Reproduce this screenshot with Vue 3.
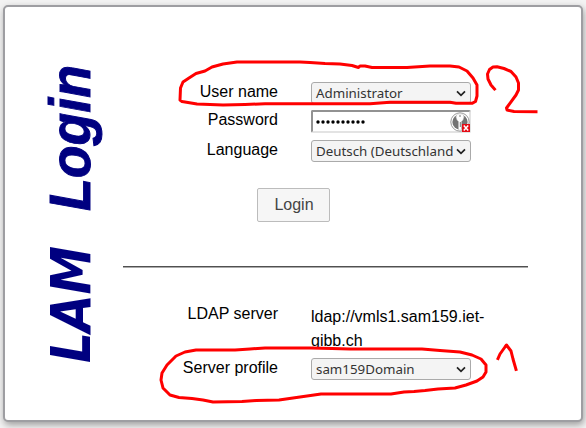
<script setup>
const credentials = [
  { label: 'User name', value: 'Administrator', type: 'select' },
  { label: 'Password', value: '••••••••••', type: 'password' },
  { label: 'Language', value: 'Deutsch (Deutschland', type: 'select' },
]
const server = { label: 'LDAP server', value: 'ldap://vmls1.sam159.iet-gibb.ch' }
const profile = { label: 'Server profile', value: 'sam159Domain' }
</script>

<template>
  <div class="page">
    <main class="card">
      <svg class="brand" width="118" height="413" viewBox="5 7 118 413">
        <text class="brand-text" transform="translate(90 363) rotate(-90)" textLength="117" lengthAdjust="spacingAndGlyphs">LAM</text>
        <text class="brand-text brand-word" transform="translate(89.5 211) rotate(-90)" textLength="146" lengthAdjust="spacingAndGlyphs">Login</text>
      </svg>

      <div class="form">
        <div v-for="row in credentials" :key="row.label" class="row">
          <label class="label">{{ row.label }}</label>
          <div v-if="row.type === 'select'" class="select">
            <span class="value">{{ row.value }}</span>
            <svg class="chevron" width="10" height="7" viewBox="0 0 10 7"><path d="M1 1.3 L5 5.3 L9 1.3" /></svg>
          </div>
          <div v-else class="password">
            <svg class="dots" width="54" height="6" viewBox="0 0 54 6">
              <circle v-for="n in 10" :key="n" :cx="n * 5 - 3" cy="3" r="1.7" />
            </svg>
            <svg class="key" width="20" height="20" viewBox="0 0 20 20">
              <circle cx="10" cy="10" r="9.2" fill="#fff" stroke="#999" />
              <circle cx="10" cy="10" r="7.6" fill="#737373" />
              <path d="M7 2 H13 L14 5 L13 8 L11.5 9.5 V18 H8.5 V9.5 L7 8 L6 5 Z" fill="#fff" stroke="#bbb" stroke-width=".5" />
              <path d="M10 3V5M10.3 10V15" stroke="#777" />
              <rect x="12" y="12" width="8" height="8" fill="#e50b16" />
              <path d="M13.8 13.5 L18.2 18.5 M18.2 13.5 L13.8 18.5" stroke="#fff" stroke-width="1.5" />
            </svg>
          </div>
        </div>

        <button class="login">Login</button>
        <div class="rule"></div>

        <div class="row server">
          <span class="label">{{ server.label }}</span>
          <span class="url">{{ server.value }}</span>
        </div>
        <div class="row">
          <label class="label">{{ profile.label }}</label>
          <div class="select">
            <span class="value">{{ profile.value }}</span>
            <svg class="chevron" width="10" height="7" viewBox="0 0 10 7"><path d="M1 1.3 L5 5.3 L9 1.3" /></svg>
          </div>
        </div>
      </div>
    </main>

    <svg class="marks" width="586" height="428" viewBox="0 0 586 428">
      <path d="M358.500 67.500 L352 65.500 L340 64 L325 63.500 L310 62.500 L300 62 L237 62 L223 64 L212 67 L205 71 L196 73.500 L189 78 L183 82 L180.500 88 L180 100 L182 101.500 L188 102.500 L197 104 L223 105 L245 104.500 L265 103.800 L370 103.800 L390 102.200 L450 102.200 L456 103.300 L472 103.300 L475.500 101.500 L477 96 L477 85 L473 78 L467 71 L459 67 L450 66 L430 66 L407 67.500 L372 67.500 L365 66 L360 66 Z" />
      <path d="M494.500 89 L491 85 L488 79 L487.500 74 L489.500 69.500 L493 67 L497 66.800 L504 68.500 L511 71.500 L516 77 L518.500 83 L518.500 90 L516 95 L506.500 108 L507 110 L514 111.500 L536 111.700" />
      <path d="M235 350 L196 350 L185 352 L176 356 L167 365 L162 373 L161 380 L163 388 L170 395 L179 397.500 L192 398.500 L203 400 L213 402 L242 401.500 L256 400.500 L279 400 L300 397 L321 394 L391 394 L404 392 L414 391.500 L425 390.500 L438 389 L455 388 L466 385 L477 381 L483 377 L486 372 L486 365 L481 359 L472 355 L460 352 L440 350.500 L422 349 L371 349 L350 349 L332 348.500 L310 348 L290 348 L265 348 L250 349 Z" />
      <path d="M498 358.500 L500 354 L505 347 L506.500 345 L511 351 L513 359 L516 369.500" />
    </svg>
  </div>
</template>

<style>
body { margin: 0; background: #f3f3f3; overflow: hidden; }
</style>

<style scoped>
.page {
  position: relative;
  width: 586px;
  height: 428px;
  box-sizing: border-box;
  padding: 5px 3px 6px;
  background: #f3f3f3;
  font: 16px/24px "Liberation Sans", Arial, sans-serif;
  color: #000;
  overflow: hidden;
}
.card {
  display: flex;
  width: 580px;
  height: 417px;
  box-sizing: border-box;
  border: 2px solid #9e9ea2;
  border-radius: 5px;
  background: #fff;
  box-shadow: 1px 3px 7px rgba(0, 0, 0, .35);
}
.brand { flex: none; }
.brand-text { font: italic 700 56px "DejaVu Sans Condensed", "DejaVu Sans", sans-serif; fill: #000080; }
.brand-word { font: italic 700 58px "Liberation Sans", Arial, sans-serif; stroke: #000080; stroke-width: 1; }
.form { width: 405px; padding-top: 73px; }
.row { display: flex; gap: 33px; height: 28px; }
.row + .row { height: 30px; }
.label { width: 155px; text-align: right; }
.select {
  display: flex;
  align-items: center;
  width: 160px;
  height: 22px;
  margin-top: 2px;
  padding: 0 4px;
  box-sizing: border-box;
  border: 1px solid #aaa;
  border-radius: 3px;
  background: #f4f4f4;
  color: #333;
  font: 13.333px/20px "Noto Sans", sans-serif;
}
.value { flex: 1; min-width: 0; white-space: nowrap; }
.chevron { flex: none; fill: none; stroke: #222; stroke-width: 1.7; }
.password {
  display: flex;
  align-items: center;
  justify-content: space-between;
  width: 160px;
  height: 23px;
  margin-top: 2px;
  padding: 0 0 0 3px;
  box-sizing: border-box;
  border: 2px solid;
  border-color: #929292 #e3e3e3 #e3e3e3 #929292;
  border-radius: 2px;
}
.dots { fill: #000; }
.key { flex: none; margin-right: -1px; }
.login {
  display: block;
  width: 73px;
  height: 34px;
  margin: 20px 0 0 134px;
  padding: 0 0 0 1px;
  border: 1px solid #bcbcbc;
  border-radius: 2px;
  background: #f6f6f6;
  color: #444;
  font: 16px/32px "Liberation Sans", Arial, sans-serif;
}
.rule { height: 1px; margin-top: 44px; border-top: 1px solid #505050; background: #aaa; }
.server { height: 54px; margin-top: 34px; }
.server + .row { height: 28px; }
.url { width: 180px; padding-top: 3px; }
.marks { position: absolute; inset: 0; fill: none; stroke: #f00; stroke-width: 3; stroke-linejoin: round; stroke-linecap: square; pointer-events: none; }
</style>
